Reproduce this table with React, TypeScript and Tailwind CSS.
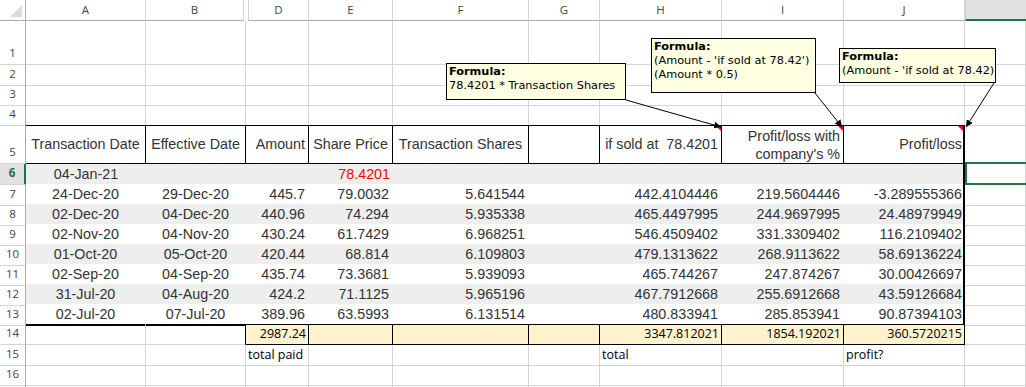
import React from 'react';

const GRID = 'grid grid-cols-[26px_120px_100px_63px_84px_136px_71px_122px_122px_121px_1fr]';
const ARIAL = "font-['Liberation_Sans',Arial,sans-serif] text-[14.3px] text-[#333]";
const CALIBRI = "font-['Open_Sans',sans-serif] text-[12.5px] text-black";
const TAHOMA = "font-['DejaVu_Sans',sans-serif] text-[11.3px] leading-[14px] text-black";

const LETTERS = ['A', 'B', 'D', 'E', 'F', 'G', 'H', 'I', 'J'];

// A, B, D, E, F, H, I, J values for rows 7-13
const rows = [
  ['24-Dec-20', '29-Dec-20', '445.7', '79.0032', '5.641544', '442.4104446', '219.5604446', '-3.289555366'],
  ['02-Dec-20', '04-Dec-20', '440.96', '74.294', '5.935338', '465.4497995', '244.9697995', '24.48979949'],
  ['02-Nov-20', '04-Nov-20', '430.24', '61.7429', '6.968251', '546.4509402', '331.3309402', '116.2109402'],
  ['01-Oct-20', '05-Oct-20', '420.44', '68.814', '6.109803', '479.1313622', '268.9113622', '58.69136224'],
  ['02-Sep-20', '04-Sep-20', '435.74', '73.3681', '5.939093', '465.744267', '247.874267', '30.00426697'],
  ['31-Jul-20', '04-Aug-20', '424.2', '71.1125', '5.965196', '467.7912668', '255.6912668', '43.59126684'],
  ['02-Jul-20', '07-Jul-20', '389.96', '63.5993', '6.131514', '480.833941', '285.853941', '90.87394103'],
];

function RowHead({ n, active }: { n?: number; active?: boolean }) {
  if (active) {
    return (
      <div className="flex items-end justify-center pb-[3px] border-b border-b-[#d4d4d4] border-r-2 border-r-[#217346] bg-[#e1e1e1] font-['Open_Sans',sans-serif] text-[11.5px] font-bold text-[#217346]">
        {n}
      </div>
    );
  }
  return (
    <div className="flex items-end justify-center pb-[3px] border-b border-b-[#d4d4d4] border-r border-r-[#ababab] font-['Open_Sans',sans-serif] text-[11.5px] text-[#444]">
      {n}
    </div>
  );
}

// plain empty cell with gridlines
function Blank({ className = '' }: { className?: string }) {
  return <div className={`border-r border-b border-[#d4d4d4] ${className}`} />;
}

function RedMark() {
  return (
    <svg className="absolute top-0 right-0" width="5" height="5">
      <polygon points="0,0 5,0 5,5" fill="#e00" />
    </svg>
  );
}

function EmptyRow({ n, h }: { n?: number; h: string }) {
  return (
    <div className={`${GRID} ${h}`}>
      <RowHead n={n} />
      {LETTERS.map((l) => (
        <Blank key={l} />
      ))}
      <Blank />
    </div>
  );
}

function DataRow({ n, vals, shade }: { n: number; vals: string[]; shade: boolean }) {
  const bg = shade ? 'bg-[#eeeeee]' : 'bg-white';
  const last = n === 13;
  const base = `flex items-center border-r border-b border-transparent ${bg} ${ARIAL} ${last ? 'border-b-black' : ''}`;
  return (
    <div className={`${GRID} h-[20px]`}>
      <RowHead n={n} />
      <div className={`${base} justify-center`}>{vals[0]}</div>
      <div className={`${base} justify-center`}>{vals[1]}</div>
      <div className={`${base} justify-end pr-[3px]`}>{vals[2]}</div>
      <div className={`${base} justify-end pr-[3px]`}>{vals[3]}</div>
      <div className={`${base} justify-end pr-[3px]`}>{vals[4]}</div>
      <div className={base} />
      <div className={`${base} justify-end pr-[3px]`}>{vals[5]}</div>
      <div className={`${base} justify-end pr-[3px]`}>{vals[6]}</div>
      <div className={`flex items-center justify-end pr-[1px] border-b border-r-2 border-transparent border-r-black ${bg} ${ARIAL} ${last ? 'border-b-black' : ''}`}>
        {vals[7]}
      </div>
      <Blank />
    </div>
  );
}

export default function App() {
  const h5 = `relative flex items-center border-t border-r border-b border-black whitespace-nowrap ${ARIAL}`;
  const y14 = `flex items-center justify-end pr-[2px] border-t border-r border-b border-black bg-[#fff2cc] ${CALIBRI}`;
  return (
    <div className="relative w-[1026px] h-[387px] overflow-hidden bg-white select-none">
      {/* column headers */}
      <div className={`${GRID} h-[21px] font-['Open_Sans',sans-serif] text-[11.5px] text-[#444]`}>
        <div className="relative border-r border-b border-[#ababab]">
          <svg className="absolute left-[10px] top-[5px]" width="12" height="12">
            <polygon points="12,0 12,12 0,12" fill="#dcdcdc" />
          </svg>
        </div>
        {LETTERS.map((l) => (
          <div
            key={l}
            className={`flex items-center justify-center border-r border-r-[#d4d4d4] border-b border-b-[#ababab] ${l === 'B' ? 'mr-[2px]' : ''} ${l === 'D' ? 'ml-[2px] border-l border-l-[#d4d4d4]' : ''}`}
          >
            {l}
          </div>
        ))}
        <div className="bg-[#e1e1e1] border-b-2 border-b-[#217346] border-l border-l-[#d4d4d4]" />
      </div>

      <EmptyRow n={1} h="h-[44px]" />
      <EmptyRow n={2} h="h-[20px]" />
      <EmptyRow n={3} h="h-[20px]" />

      {/* row 4: top of thick table border */}
      <div className={`${GRID} h-[20px]`}>
        <RowHead n={4} />
        {LETTERS.map((l) => (
          <div key={l} className="border-r border-r-[#d4d4d4] border-b border-b-black" />
        ))}
        <Blank />
      </div>

      {/* row 5: table header */}
      <div className={`${GRID} h-[39px]`}>
        <RowHead n={5} />
        <div className={`${h5} justify-center`}>Transaction Date</div>
        <div className={`${h5} justify-center`}>Effective Date</div>
        <div className={`${h5} justify-end pr-[3px]`}>Amount</div>
        <div className={`${h5} justify-center`}>Share Price</div>
        <div className={`${h5} justify-center`}>Transaction Shares</div>
        <div className={h5} />
        <div className={`${h5} justify-end pr-[3px] whitespace-pre`}>
          {'if sold at  78.4201'}
          <RedMark />
        </div>
        <div className={`${h5} justify-end pr-[3px]`}>
          <div className="text-right leading-[18px]">
            Profit/loss with
            <br />
            company's %
          </div>
          <RedMark />
        </div>
        <div className={`relative flex items-center justify-end pr-[1px] border-t border-b border-r-2 border-black ${ARIAL}`}>
          Profit/loss
          <RedMark />
        </div>
        <Blank />
      </div>

      {/* row 6 */}
      <div className={`${GRID} h-[20px]`}>
        <RowHead n={6} active />
        <div className={`flex items-center justify-center bg-[#eeeeee] ${ARIAL}`}>04-Jan-21</div>
        <div className="bg-[#eeeeee]" />
        <div className="bg-[#eeeeee]" />
        <div className={`flex items-center justify-end pr-[3px] bg-[#eeeeee] ${ARIAL} text-[#ff0000]`}>78.4201</div>
        <div className="bg-[#eeeeee]" />
        <div className="bg-[#eeeeee]" />
        <div className="bg-[#eeeeee]" />
        <div className="bg-[#eeeeee]" />
        <div className="bg-[#eeeeee] border-r-2 border-r-black" />
        <div className="relative border-r border-b border-[#d4d4d4]">
          <div className="absolute left-0 top-[-2px] bottom-[-1px] right-[-6px] border-2 border-[#217346]" />
        </div>
      </div>

      {rows.map((vals, i) => (
        <DataRow key={i} n={7 + i} vals={vals} shade={i % 2 === 1} />
      ))}

      {/* row 14: totals */}
      <div className={`${GRID} h-[21px]`}>
        <RowHead n={14} />
        <div className="border-t border-t-black border-r border-r-[#d4d4d4] border-b border-b-[#d4d4d4]" />
        <div className="border-t border-t-black border-r border-r-black border-b border-b-[#d4d4d4]" />
        <div className={y14}>2987.24</div>
        <div className={y14} />
        <div className={y14} />
        <div className={y14} />
        <div className={y14}>3347.812021</div>
        <div className={y14}>1854.192021</div>
        <div className={y14}>360.5720215</div>
        <Blank />
      </div>

      {/* row 15: labels */}
      <div className={`${GRID} h-[20px]`}>
        <RowHead n={15} />
        <Blank />
        <Blank />
        <div className={`flex items-center pl-[2px] border-r border-b border-[#d4d4d4] ${CALIBRI}`}>total paid</div>
        <Blank />
        <Blank />
        <Blank />
        <div className={`flex items-center pl-[2px] border-r border-b border-[#d4d4d4] ${CALIBRI}`}>total</div>
        <Blank />
        <div className={`flex items-center pl-[2px] border-r border-b border-[#d4d4d4] ${CALIBRI}`}>profit?</div>
        <Blank />
      </div>

      <EmptyRow n={16} h="h-[20px]" />
      <EmptyRow h="h-[20px]" />

      {/* comment callouts */}
      <svg className="absolute left-0 top-0 pointer-events-none" width="1026" height="387">
        <defs>
          <marker id="ah" viewBox="0 0 10 10" refX="10" refY="5" markerUnits="userSpaceOnUse" markerWidth="7" markerHeight="7" orient="auto">
            <path d="M0,0 L10,5 L0,10 z" fill="#000" />
          </marker>
        </defs>
        <line x1="626" y1="100" x2="721" y2="127" stroke="#000" strokeWidth="1" markerEnd="url(#ah)" />
        <line x1="815" y1="93" x2="842" y2="127" stroke="#000" strokeWidth="1" markerEnd="url(#ah)" />
        <line x1="994" y1="83" x2="966" y2="127" stroke="#000" strokeWidth="1" markerEnd="url(#ah)" />
      </svg>

      <div className={`absolute left-[446px] top-[63px] w-[180px] h-[37px] border border-black bg-[#ffffe1] pl-[2px] pt-[1px] whitespace-nowrap ${TAHOMA}`}>
        <div className="font-bold">Formula:</div>
        <div>78.4201 * Transaction Shares</div>
      </div>
      <div className={`absolute left-[651px] top-[38px] w-[165px] h-[55px] border border-black bg-[#ffffe1] pl-[2px] pt-[1px] whitespace-nowrap ${TAHOMA}`}>
        <div className="font-bold">Formula:</div>
        <div>(Amount - 'if sold at 78.42')</div>
        <div>(Amount * 0.5)</div>
      </div>
      <div className={`absolute left-[839px] top-[48px] w-[157px] h-[35px] border border-black bg-[#ffffe1] pl-[2px] pt-[1px] whitespace-nowrap ${TAHOMA}`}>
        <div className="font-bold">Formula:</div>
        <div>(Amount - 'if sold at 78.42)</div>
      </div>
    </div>
  );
}
